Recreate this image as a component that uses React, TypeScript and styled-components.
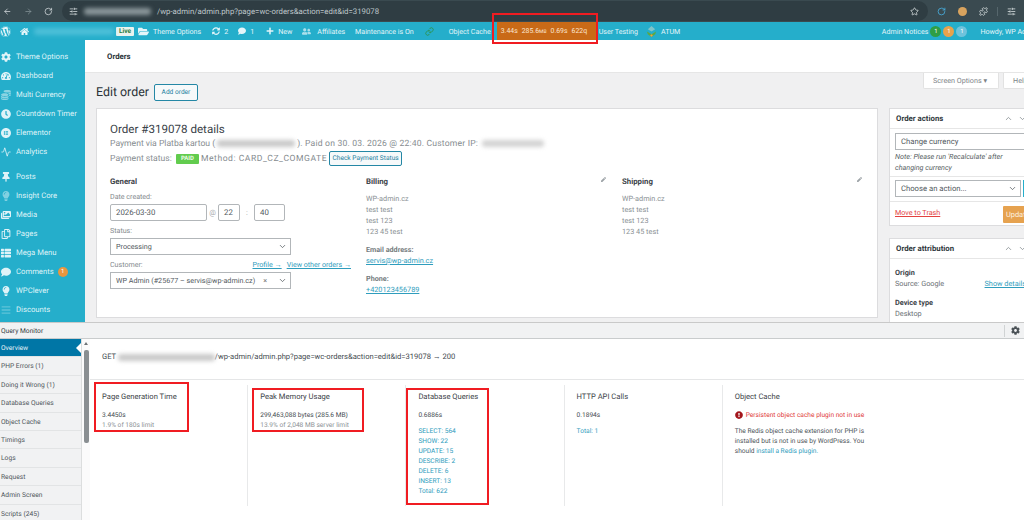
import { ReactNode } from 'react';
import styled, { createGlobalStyle } from 'styled-components';
import {
  Activity,
  ArrowLeft,
  ArrowRight,
  ChevronDown,
  ChevronUp,
  Link,
  Puzzle,
  RotateCw,
  SlidersHorizontal,
  Star,
} from 'lucide-react';
import {
  FaBars,
  FaClock,
  FaCoins,
  FaCog,
  FaComment,
  FaExclamationCircle,
  FaFolderOpen,
  FaHome,
  FaImages,
  FaLightbulb,
  FaPen,
  FaPlus,
  FaRegCopy,
  FaSyncAlt,
  FaTachometerAlt,
  FaThList,
  FaThumbtack,
  FaUserFriends,
  FaWordpress,
} from 'react-icons/fa';
import { FaElementor } from 'react-icons/fa6';

const GlobalStyle = createGlobalStyle`
  html, body {
    margin: 0;
    height: 520px;
    overflow: hidden;
    background: #fff;
    font-family: Roboto, "Liberation Sans", sans-serif;
    text-rendering: geometricPrecision;
  }
  * { box-sizing: border-box; }
`;

const Page = styled.div`
  position: relative;
  width: 1024px;
  height: 520px;
  overflow: hidden;
  display: flex;
  flex-direction: column;
`;

const BrowserBar = styled.div`
  height: 22px;
  flex: none;
  background: #3a4a50;
  display: flex;
  align-items: center;
  color: #dfe5e7;
  padding-left: 3px;
  gap: 8px;
`;

const NavIcons = styled.div`
  display: flex;
  gap: 12px;
  align-items: center;
  color: #dbe1e3;
  width: 50px;
`;

const AddressPill = styled.div`
  width: 866px;
  height: 20px;
  border-radius: 10px;
  background: #2f3d43;
  display: flex;
  align-items: center;
  padding: 0 9px 0 7px;
  gap: 6px;
  font-size: 7.8px;
  color: #bfc8cb;
  margin-left: 1px;
  white-space: nowrap;
`;

const BlurText = styled.span<{ $color?: string; $width?: number }>`
  display: inline-block;
  width: ${(p) => (p.$width ? `${p.$width}px` : 'auto')};
  height: 7px;
  border-radius: 3px;
  background: ${(p) => p.$color || '#8b979b'};
  filter: blur(2px);
  vertical-align: middle;
`;

const Grow = styled.span`
  flex: 1;
`;

const BrowserTools = styled.div`
  display: flex;
  align-items: center;
  gap: 12px;
  padding-left: 1px;
`;

const ToolSeparator = styled.span`
  width: 1px;
  height: 9px;
  background: #56666c;
  margin: 0 -3px;
`;

const ProfileDot = styled.span<{ $color: string }>`
  width: 9px;
  height: 9px;
  border-radius: 50%;
  background: ${(p) => p.$color};
`;

const AdminBar = styled.div`
  height: 18px;
  flex: none;
  background: #25aecb;
  display: flex;
  align-items: center;
  color: #e4f5f9;
  font-size: 7.1px;
  white-space: nowrap;
`;

const BarItem = styled.span<{ $ml?: number; $gap?: number }>`
  display: inline-flex;
  align-items: center;
  gap: ${(p) => p.$gap ?? 4}px;
  margin-left: ${(p) => p.$ml ?? 0}px;
`;

const LiveBadge = styled.span`
  background: #e9f3ef;
  color: #2c7d42;
  font-weight: 700;
  font-size: 6.6px;
  height: 9px;
  width: 18px;
  line-height: 9px;
  text-align: center;
  border-radius: 1px;
  margin-left: 2px;
`;

const CacheItem = styled.span`
  margin-left: 6px;
  width: 99px;
  height: 18px;
  background: #c96a17;
  color: #fbe6d2;
  display: flex;
  align-items: center;
  padding: 0 4px;
  gap: 4px;
  font-size: 6.9px;
`;

const SmallUnit = styled.span`
  font-size: 5px;
`;

const BarRight = styled.div`
  margin-left: auto;
  margin-right: -14px;
  display: flex;
  align-items: center;
  flex: none;
`;

const Bubble = styled.span<{ $color: string; $ml?: number }>`
  width: 11px;
  height: 11px;
  border-radius: 50%;
  background: ${(p) => p.$color};
  color: #fff;
  font-size: 6px;
  text-align: center;
  line-height: 11px;
  margin-left: ${(p) => p.$ml ?? 2}px;
`;

const Workspace = styled.div`
  height: 283px;
  flex: none;
  display: flex;
  border-bottom: 1px solid #c9c9c9;
  overflow: hidden;
`;

const Sidebar = styled.nav`
  width: 85px;
  flex: none;
  background: #25aecb;
  padding-top: 7px;
`;

const MenuItem = styled.div<{ $gapAfter?: boolean }>`
  height: 19px;
  display: flex;
  align-items: center;
  color: #dff3f8;
  font-size: 7.7px;
  padding-left: 1px;
  gap: 5px;
  white-space: nowrap;
  margin-bottom: ${(p) => (p.$gapAfter ? '6px' : '0')};
  svg {
    width: 10px;
    height: 10px;
    flex: none;
  }
`;

const MenuBadge = styled.span`
  width: 10px;
  height: 10px;
  border-radius: 50%;
  background: #e8963f;
  color: #fff;
  font-size: 6px;
  text-align: center;
  line-height: 10px;
  margin-left: -1px;
`;

const Main = styled.main`
  flex: 1;
  min-width: 0;
  background: #f0f0f1;
  overflow: hidden;
`;

const PageHead = styled.div`
  height: 33px;
  background: #fff;
  border-bottom: 1px solid #e6e6e6;
  padding: 0 22px;
  display: flex;
  align-items: center;
  font-size: 7.8px;
  font-weight: 700;
  color: #2b3338;
`;

const TabsRow = styled.div`
  height: 16px;
  display: flex;
  justify-content: flex-end;
  gap: 4px;
  margin-right: -20px;
  margin-bottom: -6px;
`;

const ScreenTab = styled.div<{ $w: number }>`
  width: ${(p) => p.$w}px;
  height: 16px;
  background: #fff;
  border: 1px solid #e2e2e2;
  border-top: none;
  border-radius: 0 0 2px 2px;
  color: #7c8387;
  font-size: 7.2px;
  line-height: 15px;
  padding-left: 9px;
  white-space: nowrap;
`;

const TitleRow = styled.div`
  height: 19px;
  display: flex;
  align-items: center;
  gap: 5px;
  padding-left: 11px;
  margin-bottom: 6px;
`;

const PageTitle = styled.h1`
  margin: 0;
  font-weight: 400;
  font-size: 12.4px;
  color: #2b3338;
`;

const OutlineButton = styled.span<{ $h: number; $w: number }>`
  display: inline-block;
  width: ${(p) => p.$w}px;
  height: ${(p) => p.$h}px;
  line-height: ${(p) => p.$h - 2}px;
  text-align: center;
  border: 1px solid #2487a5;
  border-radius: 2px;
  background: #f6f9fa;
  color: #24809f;
  font-size: 6.6px;
  white-space: nowrap;
`;

const Columns = styled.div`
  display: flex;
  gap: 11px;
  padding: 0 0 0 11px;
`;

const OrderCard = styled.section`
  width: 782px;
  height: 210px;
  flex: none;
  background: #fff;
  border: 1px solid #dcdcde;
  padding: 14px 13px 0;
`;

const OrderTitle = styled.h2`
  margin: 0;
  font-weight: 400;
  font-size: 11.6px;
  line-height: 13px;
  color: #3a4248;
`;

const OrderMeta = styled.p`
  margin: 0;
  height: 15px;
  display: flex;
  align-items: center;
  gap: 2px;
  color: #868c90;
  font-size: 8.6px;
  white-space: pre;
`;

const Spaced = styled.span<{ $ls: number }>`
  letter-spacing: ${(p) => p.$ls}px;
`;

const PaidBadge = styled.span`
  background: #62cc4e;
  color: #eefbe9;
  font-size: 6px;
  font-weight: 700;
  width: 23px;
  height: 10px;
  line-height: 10px;
  text-align: center;
  border-radius: 1px;
`;

const AddressGrid = styled.div`
  display: grid;
  grid-template-columns: repeat(3, 256px);
  margin-top: 10px;
`;

const ColumnHead = styled.div`
  display: flex;
  justify-content: space-between;
  align-items: center;
  font-size: 7.8px;
  font-weight: 700;
  color: #3d4449;
  height: 10px;
  padding-right: 16px;
  svg {
    width: 5px;
    height: 5px;
    color: #9ea4a8;
    margin-top: -4px;
  }
`;

const FieldLabel = styled.div<{ $mt?: number }>`
  font-size: 7.1px;
  color: #83898d;
  height: 10px;
  line-height: 10px;
  margin-top: ${(p) => p.$mt ?? 0}px;
  margin-bottom: 2px;
  display: flex;
  width: 241px;
  justify-content: space-between;
`;

const FieldLinks = styled.span`
  display: flex;
  gap: 5px;
  color: #2f9dbd;
  text-decoration: underline;
`;

const DateRow = styled.div`
  display: flex;
  align-items: center;
  color: #a5a9ac;
  font-size: 7.4px;
  margin-bottom: 5px;
`;

const DateMark = styled.span<{ $w: number }>`
  width: ${(p) => p.$w}px;
  text-align: center;
`;

const TextBox = styled.div<{ $w: number }>`
  width: ${(p) => p.$w}px;
  height: 17px;
  border: 1px solid #b2b6b9;
  border-radius: 2px;
  background: #fff;
  color: #50575c;
  font-size: 7.8px;
  line-height: 15px;
  padding-left: 5px;
`;

const SelectBox = styled.div<{ $w: number; $mb?: number; $fs?: number }>`
  width: ${(p) => p.$w}px;
  height: 17px;
  margin-bottom: ${(p) => p.$mb ?? 0}px;
  border: 1px solid #b2b6b9;
  background: #fff;
  color: #50575c;
  font-size: ${(p) => p.$fs ?? 7.2}px;
  display: flex;
  align-items: center;
  padding: 0 3px 0 5px;
  white-space: nowrap;
  svg {
    width: 9px;
    height: 9px;
    margin-left: auto;
    flex: none;
  }
`;

const ClearMark = styled.span`
  margin-left: 8px;
  color: #777;
`;

const AddressText = styled.div`
  margin-top: 7px;
  font-size: 7.3px;
  line-height: 11px;
  color: #8a9094;
`;

const AddressLabel = styled.div`
  margin-top: 7px;
  font-size: 7.2px;
  line-height: 11px;
  font-weight: 700;
  color: #767c80;
`;

const AddressLink = styled.div`
  font-size: 7.3px;
  line-height: 11px;
  color: #2f9dbd;
  text-decoration: underline;
`;

const SideColumn = styled.aside`
  width: 150px;
  flex: none;
  display: flex;
  flex-direction: column;
  gap: 12px;
`;

const MetaBox = styled.section<{ $h: number }>`
  height: ${(p) => p.$h}px;
  background: #fff;
  border: 1px solid #dcdcde;
`;

const MetaHead = styled.div`
  height: 20px;
  border-bottom: 1px solid #e6e6e6;
  display: flex;
  align-items: center;
  padding-left: 6px;
  font-size: 7.8px;
  font-weight: 700;
  color: #30373c;
  svg {
    width: 9px;
    height: 9px;
    color: #7e8589;
  }
`;

const HeadArrows = styled.span`
  margin-left: auto;
  margin-right: 11px;
  display: flex;
  gap: 5px;
`;

const MetaBody = styled.div`
  padding: 4px 5px 0;
`;

const Note = styled.div`
  font-size: 7.2px;
  font-style: italic;
  line-height: 11px;
  color: #555c61;
  margin: 1px 0 3px;
  width: 122px;
  white-space: nowrap;
`;

const MetaDivider = styled.div<{ $my: number }>`
  border-top: 1px solid #e6e6e6;
  margin: ${(p) => p.$my}px -5px;
`;

const TrashRow = styled.div`
  display: flex;
  align-items: flex-start;
  justify-content: space-between;
  height: 17px;
`;

const TrashLink = styled.span`
  font-size: 7.2px;
  line-height: 10px;
  margin-top: 2px;
  color: #e3423f;
  text-decoration: underline;
`;

const UpdateButton = styled.span`
  width: 30px;
  height: 17px;
  border-radius: 1px;
  background: #e6a24f;
  color: #fdf2e3;
  font-size: 7.4px;
  line-height: 17px;
  padding-left: 3px;
  overflow: hidden;
`;

const ActionRow = styled.div`
  display: flex;
  gap: 2px;
`;

const ApplyStub = styled.span`
  width: 10px;
  height: 17px;
  background: #25aecb;
  flex: none;
`;

const AttrBody = styled.div`
  padding: 9px 5px 0;
  font-size: 7.3px;
  line-height: 10.5px;
  color: #6b7176;
`;

const AttrLabel = styled.div<{ $mt?: number }>`
  font-weight: 700;
  color: #3d4449;
  margin-top: ${(p) => p.$mt ?? 0}px;
`;

const AttrLine = styled.div`
  display: flex;
  width: 131px;
  justify-content: space-between;
  white-space: nowrap;
  span:last-child {
    color: #2f9dbd;
    text-decoration: underline;
  }
`;

const MonitorHead = styled.div`
  height: 16px;
  flex: none;
  background: #f1f2f3;
  border-bottom: 1px solid #c9cccd;
  display: flex;
  align-items: center;
  padding-left: 1px;
  font-size: 6.7px;
  color: #353c41;
`;

const MonitorTool = styled.span`
  margin-left: auto;
  width: 20px;
  height: 12px;
  border-left: 1px solid #d0d3d4;
  padding-left: 6px;
  color: #4b5257;
  display: flex;
  align-items: center;
  svg {
    width: 9px;
    height: 9px;
  }
`;

const Monitor = styled.div`
  flex: 1;
  min-height: 0;
  display: flex;
  overflow: hidden;
`;

const MonitorNav = styled.div`
  width: 82px;
  flex: none;
  background: #f1f2f3;
  border-right: 1px solid #dcdede;
`;

const NavRow = styled.div<{ $active?: boolean }>`
  position: relative;
  height: 18.4px;
  line-height: 18px;
  font-size: 6.7px;
  padding-left: 1px;
  border-bottom: 1px solid #e2e4e5;
  color: ${(p) => (p.$active ? '#e8f4f9' : '#4f565b')};
  background: ${(p) => (p.$active ? '#0076a6' : 'transparent')};
  &::after {
    content: '';
    display: ${(p) => (p.$active ? 'block' : 'none')};
    position: absolute;
    right: 0;
    top: 4px;
    border: 5px solid transparent;
    border-right-color: #fff;
  }
`;

const ScrollTrack = styled.div`
  position: relative;
  width: 8px;
  flex: none;
  padding: 11px 0 0 2px;
  background: #fbfbfb;
  &::before {
    content: '';
    position: absolute;
    left: 2px;
    top: 3px;
    border: 2.5px solid transparent;
    border-top: none;
    border-bottom: 3px solid #6f7477;
  }
`;

const ScrollThumb = styled.div`
  width: 5px;
  height: 93px;
  border-radius: 2px;
  background: #8a8f92;
`;

const MonitorBody = styled.div`
  flex: 1;
  min-width: 0;
`;

const RequestLine = styled.div`
  height: 41px;
  border-bottom: 1px solid #e5e6e7;
  padding: 12px 0 0 12px;
  font-size: 7.6px;
  line-height: 11px;
  color: #454c51;
  white-space: pre;
`;

const StatGrid = styled.div`
  display: flex;
  margin-top: 5px;
`;

const Stat = styled.div`
  width: 158.2px;
  flex: none;
  height: 121px;
  padding: 6px 12px 0 12px;
  border-right: 1px solid #e8e9ea;
  &:last-child {
    border-right: none;
  }
`;

const StatTitle = styled.div`
  font-size: 7.6px;
  line-height: 11px;
  color: #3c4348;
  margin-bottom: 8px;
  white-space: nowrap;
`;

const StatValue = styled.div`
  font-size: 6.6px;
  line-height: 10px;
  color: #454c51;
  white-space: nowrap;
`;

const StatMuted = styled.div`
  font-size: 6.6px;
  line-height: 10px;
  color: #8b9195;
  white-space: nowrap;
`;

const QueryList = styled.div`
  margin-top: 6px;
  font-size: 6.6px;
  line-height: 10px;
  color: #2f9dbd;
  white-space: nowrap;
`;

const CacheWarning = styled.div`
  display: flex;
  align-items: center;
  gap: 3px;
  color: #e0393a;
  font-size: 6.6px;
  line-height: 10px;
  white-space: nowrap;
  svg {
    width: 8px;
    height: 8px;
    color: #a3161c;
  }
`;

const CacheText = styled.p`
  margin: 6px 0 0;
  font-size: 6.6px;
  line-height: 10px;
  color: #4c5358;
  width: 132px;
  a {
    color: #2f9dbd;
    text-decoration: none;
  }
`;

// red annotation frames drawn on top of the screenshot
const RedFrame = styled.div<{ $x: number; $y: number; $w: number; $h: number }>`
  position: absolute;
  left: ${(p) => p.$x}px;
  top: ${(p) => p.$y}px;
  width: ${(p) => p.$w}px;
  height: ${(p) => p.$h}px;
  border: 2px solid #f01c22;
  pointer-events: none;
`;

const menu: { label: string; icon: ReactNode; gapAfter?: boolean; badge?: string }[] = [
  { label: 'Theme Options', icon: <FaCog /> },
  { label: 'Dashboard', icon: <FaTachometerAlt /> },
  { label: 'Multi Currency', icon: <FaCoins style={{ opacity: 0.55 }} /> },
  { label: 'Countdown Timer', icon: <FaClock /> },
  { label: 'Elementor', icon: <FaElementor /> },
  { label: 'Analytics', icon: <Activity />, gapAfter: true },
  { label: 'Posts', icon: <FaThumbtack /> },
  { label: 'Insight Core', icon: <FaLightbulb style={{ opacity: 0.5 }} /> },
  { label: 'Media', icon: <FaImages /> },
  { label: 'Pages', icon: <FaRegCopy /> },
  { label: 'Mega Menu', icon: <FaThList /> },
  { label: 'Comments', icon: <FaComment />, badge: '1' },
  { label: 'WPClever', icon: <FaLightbulb /> },
  { label: 'Discounts', icon: <FaBars style={{ opacity: 0.3 }} /> },
];

const monitorNav = [
  'Overview',
  'PHP Errors (1)',
  'Doing it Wrong (1)',
  'Database Queries',
  'Object Cache',
  'Timings',
  'Logs',
  'Request',
  'Admin Screen',
  'Scripts (245)',
];

const queries = ['SELECT: 564', 'SHOW: 22', 'UPDATE: 15', 'DESCRIBE: 2', 'DELETE: 6', 'INSERT: 13', 'Total: 622'];

const addressLines = ['WP-admin.cz', 'test test', 'test 123', '123 45 test'];

export default function App() {
  return (
    <Page>
      <GlobalStyle />
      <BrowserBar>
        <NavIcons>
          <ArrowLeft size={9} />
          <ArrowRight size={9} color="#87959a" />
          <RotateCw size={9} />
        </NavIcons>
        <AddressPill>
          <SlidersHorizontal size={9} color="#dbe1e3" />
          <BlurText $width={67} />
          <span>/wp-admin/admin.php?page=wc-orders&amp;action=edit&amp;id=319078</span>
          <Grow />
          <Star size={9} color="#dbe1e3" />
        </AddressPill>
        <BrowserTools>
          <RotateCw size={9} color="#48b6ea" />
          <ProfileDot $color="#d8a35e" />
          <Puzzle size={9} />
          <ToolSeparator />
          <SlidersHorizontal size={9} />
        </BrowserTools>
      </BrowserBar>

      <AdminBar>
        <BarItem>
          <FaWordpress size={11} />
        </BarItem>
        <BarItem $ml={9}>
          <FaHome size={9} />
        </BarItem>
        <BarItem $ml={5}>
          <BlurText $color="#4dbfd8" $width={80} />
        </BarItem>
        <LiveBadge>Live</LiveBadge>
        <BarItem $ml={4}>
          <FaFolderOpen size={11} />
          Theme Options
        </BarItem>
        <BarItem $ml={11}>
          <FaSyncAlt size={8} />
          2
        </BarItem>
        <BarItem $ml={10}>
          <FaComment size={8} />
          1
        </BarItem>
        <BarItem $ml={12}>
          <FaPlus size={8} />
          New
        </BarItem>
        <BarItem $ml={10} $gap={6}>
          <FaUserFriends size={9} style={{ opacity: 0.7 }} />
          Affiliates
        </BarItem>
        <BarItem $ml={10}>Maintenance is On</BarItem>
        <BarItem $ml={11}>
          <Link size={9} color="#2f8f3d" />
        </BarItem>
        <BarItem $ml={15}>Object Cache</BarItem>
        <CacheItem>
          <span>3.44s</span>
          <span>
            285.6<SmallUnit>MB</SmallUnit>
          </span>
          <span>0.69s</span>
          <span>622q</span>
        </CacheItem>
        <BarItem $ml={3}>User Testing</BarItem>
        <BarItem $ml={8}>
          <svg width="11" height="11" viewBox="0 0 12 12">
            <path d="M6 0 10 3.5 6 6 2 3.5Z" fill="#7fc4c9" />
            <path d="M1 6 6 9 11 6 10 9 6 12 2 9Z" fill="#5fa83f" />
            <path d="M4.5 10 6 9 7.5 10 6 12Z" fill="#e8a24c" />
          </svg>
          ATUM
        </BarItem>
        <BarRight>
          Admin Notices
          <Bubble $color="#2f9e44">1</Bubble>
          <Bubble $color="#e8a24c">1</Bubble>
          <Bubble $color="#6fc3dc">1</Bubble>
          <BarItem $ml={13}>Howdy, WP Admin</BarItem>
        </BarRight>
      </AdminBar>

      <Workspace>
        <Sidebar>
          {menu.map((item) => (
            <MenuItem key={item.label} $gapAfter={item.gapAfter}>
              {item.icon}
              {item.label}
              {item.badge && <MenuBadge>{item.badge}</MenuBadge>}
            </MenuItem>
          ))}
        </Sidebar>
        <Main>
          <PageHead>Orders</PageHead>
          <TabsRow>
            <ScreenTab $w={76}>Screen Options ▾</ScreenTab>
            <ScreenTab $w={41}>Help</ScreenTab>
          </TabsRow>
          <TitleRow>
            <PageTitle>Edit order</PageTitle>
            <OutlineButton $w={44} $h={17}>
              Add order
            </OutlineButton>
          </TitleRow>
          <Columns>
            <OrderCard>
              <OrderTitle>Order #319078 details</OrderTitle>
              <OrderMeta>
                Payment via Platba kartou (<BlurText $color="#c9c9c9" $width={78} />
                <Spaced $ls={0.18}>). Paid on 30. 03. 2026 @ 22:40. Customer IP: </Spaced>
                <BlurText $color="#d3d3d3" $width={62} />
              </OrderMeta>
              <OrderMeta>
                Payment status: <PaidBadge>PAID</PaidBadge> <Spaced $ls={0.52}>Method: CARD_CZ_COMGATE</Spaced>{' '}
                <OutlineButton $w={73} $h={15}>
                  Check Payment Status
                </OutlineButton>
              </OrderMeta>
              <AddressGrid>
                <div>
                  <ColumnHead>General</ColumnHead>
                  <FieldLabel $mt={6}>Date created:</FieldLabel>
                  <DateRow>
                    <TextBox $w={97}>2026-03-30</TextBox>
                    <DateMark $w={11}>@</DateMark>
                    <TextBox $w={22}>22</TextBox>
                    <DateMark $w={14}>:</DateMark>
                    <TextBox $w={31}>40</TextBox>
                  </DateRow>
                  <FieldLabel>Status:</FieldLabel>
                  <SelectBox $w={181} $mb={5}>
                    Processing
                    <ChevronDown />
                  </SelectBox>
                  <FieldLabel>
                    Customer:
                    <FieldLinks>
                      <span>Profile →</span>
                      <span>View other orders →</span>
                    </FieldLinks>
                  </FieldLabel>
                  <SelectBox $w={181}>
                    WP Admin (#25677 – servis@wp-admin.cz)
                    <ClearMark>×</ClearMark>
                    <ChevronDown />
                  </SelectBox>
                </div>
                <div>
                  <ColumnHead>
                    Billing
                    <FaPen />
                  </ColumnHead>
                  <AddressText>
                    {addressLines.map((line) => (
                      <div key={line}>{line}</div>
                    ))}
                  </AddressText>
                  <AddressLabel>Email address:</AddressLabel>
                  <AddressLink>servis@wp-admin.cz</AddressLink>
                  <AddressLabel>Phone:</AddressLabel>
                  <AddressLink>+420123456789</AddressLink>
                </div>
                <div>
                  <ColumnHead>
                    Shipping
                    <FaPen />
                  </ColumnHead>
                  <AddressText>
                    {addressLines.map((line) => (
                      <div key={line}>{line}</div>
                    ))}
                  </AddressText>
                </div>
              </AddressGrid>
            </OrderCard>
            <SideColumn>
              <MetaBox $h={118}>
                <MetaHead>
                  Order actions
                  <HeadArrows>
                    <ChevronUp />
                    <ChevronDown />
                  </HeadArrows>
                </MetaHead>
                <MetaBody>
                  <SelectBox $w={140} $fs={7.7}>
                    Change currency
                  </SelectBox>
                  <Note>
                    Note: Please run 'Recalculate' after
                    <br />
                    changing currency
                  </Note>
                  <MetaDivider $my={3} />
                  <ActionRow>
                    <SelectBox $w={127} $fs={7.7}>
                      Choose an action...
                      <ChevronDown />
                    </SelectBox>
                    <ApplyStub />
                  </ActionRow>
                  <MetaDivider $my={4} />
                  <TrashRow>
                    <TrashLink>Move to Trash</TrashLink>
                    <UpdateButton>Update</UpdateButton>
                  </TrashRow>
                </MetaBody>
              </MetaBox>
              <MetaBox $h={100}>
                <MetaHead>
                  Order attribution
                  <HeadArrows>
                    <ChevronUp />
                    <ChevronDown />
                  </HeadArrows>
                </MetaHead>
                <AttrBody>
                  <AttrLabel>Origin</AttrLabel>
                  <AttrLine>
                    <span>Source: Google</span>
                    <span>Show details</span>
                  </AttrLine>
                  <AttrLabel $mt={9}>Device type</AttrLabel>
                  <div>Desktop</div>
                </AttrBody>
              </MetaBox>
            </SideColumn>
          </Columns>
        </Main>
      </Workspace>

      <MonitorHead>
        Query Monitor
        <MonitorTool>
          <FaCog />
        </MonitorTool>
      </MonitorHead>
      <Monitor>
        <MonitorNav>
          {monitorNav.map((label, i) => (
            <NavRow key={label} $active={i === 0}>
              {label}
            </NavRow>
          ))}
        </MonitorNav>
        <ScrollTrack>
          <ScrollThumb />
        </ScrollTrack>
        <MonitorBody>
          <RequestLine>
            GET <BlurText $color="#c9c9c9" $width={97} />
            /wp-admin/admin.php?page=wc-orders&amp;action=edit&amp;id=319078 → 200
          </RequestLine>
          <StatGrid>
            <Stat>
              <StatTitle>Page Generation Time</StatTitle>
              <StatValue>3.4450s</StatValue>
              <StatMuted>1.9% of 180s limit</StatMuted>
            </Stat>
            <Stat>
              <StatTitle>Peak Memory Usage</StatTitle>
              <StatValue>299,463,088 bytes (285.6 MB)</StatValue>
              <StatMuted>13.9% of 2,048 MB server limit</StatMuted>
            </Stat>
            <Stat>
              <StatTitle>Database Queries</StatTitle>
              <StatValue>0.6886s</StatValue>
              <QueryList>
                {queries.map((q) => (
                  <div key={q}>{q}</div>
                ))}
              </QueryList>
            </Stat>
            <Stat>
              <StatTitle>HTTP API Calls</StatTitle>
              <StatValue>0.1894s</StatValue>
              <QueryList>Total: 1</QueryList>
            </Stat>
            <Stat>
              <StatTitle>Object Cache</StatTitle>
              <CacheWarning>
                <FaExclamationCircle />
                Persistent object cache plugin not in use
              </CacheWarning>
              <CacheText>
                The Redis object cache extension for PHP is installed but is not in use by WordPress. You should{' '}
                <a>install a Redis plugin.</a>
              </CacheText>
            </Stat>
          </StatGrid>
        </MonitorBody>
      </Monitor>

      <RedFrame $x={492} $y={13} $w={106} $h={31} />
      <RedFrame $x={94} $y={382} $w={95} $h={50} />
      <RedFrame $x={252} $y={388} $w={112} $h={44} />
      <RedFrame $x={406} $y={388} $w={83} $h={117} />
    </Page>
  );
}
